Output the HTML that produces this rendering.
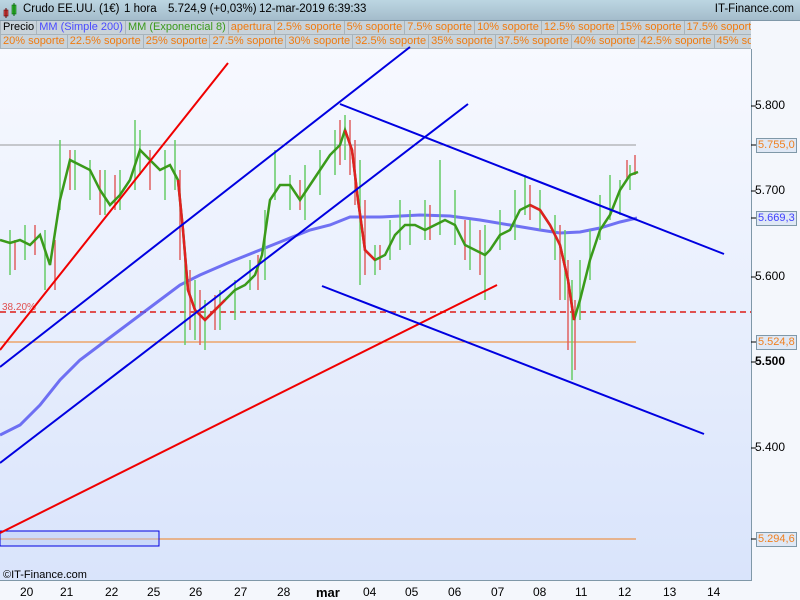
<!DOCTYPE html><html><head><style>
body{margin:0;width:800px;height:600px;overflow:hidden;font-family:"Liberation Sans",sans-serif;background:#f4f7fc;position:relative}
.hdr{position:absolute;left:0;top:0;width:800px;height:20px;background:linear-gradient(#bcd6e2,#a4bccb);border-bottom:1px solid #7f98a8}
.hdr span{position:absolute;top:3px;font-size:11.5px;color:#000;white-space:nowrap}
.row{position:absolute;left:0;height:14px;font-size:11px;white-space:nowrap;overflow:hidden;width:751px}
.row span{display:inline-block;background:#c9d3da;border:1px solid #a8b4bc;border-top:none;padding:0 2px;line-height:13px;color:#f07b10;margin-right:-1px}
.r{position:absolute;left:755px;font-size:12px;color:#000}
.box{position:absolute;left:756px;font-size:11px;border:1px solid #7f98a8;background:#dfe8f5;padding:0 1px;line-height:13px}
.d{position:absolute;top:585px;font-size:12px;color:#000}
</style></head><body>
<div style="position:absolute;left:0;top:49px;width:751px;height:531px;background:linear-gradient(#f7f9ff,#d9e4fb);border-right:1px solid #7f98a8;border-bottom:1px solid #7f98a8"></div>
<div class="hdr">
<svg style="position:absolute;left:3px;top:3px" width="14" height="15"><rect x="1" y="7" width="4" height="6" fill="#e05050" stroke="#600" stroke-width=".6"/><line x1="3" y1="5" x2="3" y2="15" stroke="#600"/><rect x="9" y="2" width="4" height="9" fill="#40c040" stroke="#060" stroke-width=".6"/><line x1="11" y1="0" x2="11" y2="13" stroke="#060"/></svg>
<span style="left:23px">Crudo EE.UU. (1€)</span><span style="left:124px">1 hora</span><span style="left:168px">5.724,9 (+0,03%)</span><span style="left:259px">12-mar-2019 6:39:33</span>
<span style="right:6px">IT-Finance.com</span></div>
<div class="row" style="top:21px"><span style="color:#000">Precio</span><span style="color:#4a4aff">MM (Simple 200)</span><span style="color:#3a9a1a">MM (Exponencial 8)</span><span>apertura</span><span>2.5% soporte</span><span>5% soporte</span><span>7.5% soporte</span><span>10% soporte</span><span>12.5% soporte</span><span>15% soporte</span><span>17.5% soporte</span></div>
<div class="row" style="top:35px"><span>20% soporte</span><span>22.5% soporte</span><span>25% soporte</span><span>27.5% soporte</span><span>30% soporte</span><span>32.5% soporte</span><span>35% soporte</span><span>37.5% soporte</span><span>40% soporte</span><span>42.5% soporte</span><span>45% soporte</span></div>
<svg style="position:absolute;left:0;top:0" width="751" height="580">
<line x1="0" y1="145" x2="636" y2="145" stroke="#999" stroke-width="1"/>
<line x1="0" y1="342" x2="636" y2="342" stroke="#f08020"/>
<line x1="0" y1="539" x2="636" y2="539" stroke="#f08020"/>
<line x1="0" y1="312" x2="751" y2="312" stroke="#e05050" stroke-width="2" stroke-dasharray="6,4"/>
<rect x="0" y="531" width="159" height="15" fill="rgba(180,200,250,.4)" stroke="#0000e0"/>
<text x="2" y="310" font-size="10" fill="#e05050" font-family="Liberation Sans">38.20%</text>
<text x="3" y="578" font-size="11" fill="#000" font-family="Liberation Sans">©IT-Finance.com</text>
<polyline fill="none" stroke="#5050f0" stroke-width="3" opacity=".8" points="0,435 20,425 40,405 60,380 80,360 100,345 120,330 140,315 160,300 180,285 200,275 230,262 260,250 290,238 310,230 330,225 350,217 380,217 420,215 450,216 480,220 510,225 540,230 560,233 580,232 600,228 620,222 637,218"/>
<g stroke="#6c6" stroke-width="1.5">
<path d="M10 230V275M25 225V260M45 230V290M60 140V210M75 150V190M90 160V200M105 170V215M120 170V210M135 120V190M140 130V175M165 150V200M175 140V190M185 250V345M195 280V340M205 300V350M220 290V330M235 280V320M250 260V290M265 210V280M275 150V200M290 175V210M305 165V220M320 150V195M335 130V175M345 115V160M360 160V285M375 245V275M390 220V260M400 200V250M410 210V245M425 200V240M440 160V235M455 190V245M470 220V270M485 225V300M500 210V250M515 190V240M525 175V215M540 190V230M555 215V260M565 230V300M572 280V380M580 260V320M590 230V280M600 195V240M610 175V220M620 180V215M630 165V190"/></g>
<g stroke="#e06060" stroke-width="1.5"><path d="M15 240V270M35 225V255M55 240V290M70 150V190M100 170V215M115 175V210M150 150V190M180 170V260M190 270V330M200 290V345M215 295V330M258 255V290M300 180V210M340 120V165M350 120V175M355 140V205M365 200V275M380 245V270M430 205V240M465 220V260M480 230V275M530 185V220M560 225V300M568 260V350M575 300V370M627 160V180M635 155V175"/></g>
<polyline fill="none" stroke="#3a9a1a" stroke-width="2.5" points="0,240 10,243 20,240 30,245 40,235 50,265 60,200 70,160 80,165 90,170 100,190 110,205 120,195 130,180 140,150 150,160 160,170 170,165 178,180 183,230 188,290 195,310 205,320 215,310 225,300 235,290 245,285 255,275 262,255 270,200 280,185 290,185 300,200 310,185 320,170 330,155 340,145 345,130 352,150 358,200 365,250 375,260 385,255 395,235 405,225 415,225 425,230 435,225 445,220 455,225 465,245 475,250 485,255 490,250 500,235 510,230 520,210 530,205 540,210 550,225 560,245 568,280 574,320 580,300 590,260 600,230 610,215 620,190 630,175 638,172"/>
<polyline fill="none" stroke="#e02020" stroke-width="2.5" points="178,180 183,230 188,290 195,310 205,320 215,310 225,300"/>
<polyline fill="none" stroke="#e02020" stroke-width="2.5" points="345,130 352,150 358,200 365,250 375,260"/>
<polyline fill="none" stroke="#e02020" stroke-width="2.5" points="530,205 540,210 550,225 560,245 568,280 574,320"/>
<g stroke-width="2" fill="none">
<line x1="0" y1="350" x2="228" y2="63" stroke="#f00000"/>
<line x1="0" y1="533" x2="497" y2="285" stroke="#f00000"/>
<line x1="0" y1="367" x2="410" y2="47" stroke="#0000e0"/>
<line x1="0" y1="463" x2="468" y2="104" stroke="#0000e0"/>
<line x1="340" y1="104" x2="724" y2="254" stroke="#0000e0"/>
<line x1="322" y1="286" x2="704" y2="434" stroke="#0000e0"/>
</g>
<g stroke="#000"><path d="M27 581v5M67 581v5M112 581v5M154 581v5M196 581v5M241 581v5M284 581v5M327 581v5M370 581v5M412 581v5M455 581v5M498 581v5M540 581v5M582 581v5M625 581v5M670 581v5M714 581v5"/></g>
</svg>
<svg style="position:absolute;left:751px;top:0" width="6" height="580"><path d="M0 106h5M0 145h5M0 191h5M0 218h5M0 277h5M0 342h5M0 362h5M0 448h5M0 539h5" stroke="#000"/></svg>
<div class="r" style="top:98px">5.800</div>
<div class="box" style="top:138px;color:#f08020">5.755,0</div>
<div class="r" style="top:183px">5.700</div>
<div class="box" style="top:211px;color:#4040ff">5.669,3</div>
<div class="r" style="top:269px">5.600</div>
<div class="box" style="top:335px;color:#f08020">5.524,8</div>
<div class="r" style="top:354px;font-weight:bold;font-size:12px">5.500</div>
<div class="r" style="top:440px">5.400</div>
<div class="box" style="top:532px;color:#f08020">5.294,6</div>
<div class="d" style="left:20px">20</div><div class="d" style="left:60px">21</div><div class="d" style="left:105px">22</div><div class="d" style="left:147px">25</div><div class="d" style="left:189px">26</div><div class="d" style="left:234px">27</div><div class="d" style="left:277px">28</div><div class="d" style="left:316px;font-weight:bold;font-size:13px">mar</div><div class="d" style="left:363px">04</div><div class="d" style="left:405px">05</div><div class="d" style="left:448px">06</div><div class="d" style="left:491px">07</div><div class="d" style="left:533px">08</div><div class="d" style="left:575px">11</div><div class="d" style="left:618px">12</div><div class="d" style="left:663px">13</div><div class="d" style="left:707px">14</div>
</body></html>
